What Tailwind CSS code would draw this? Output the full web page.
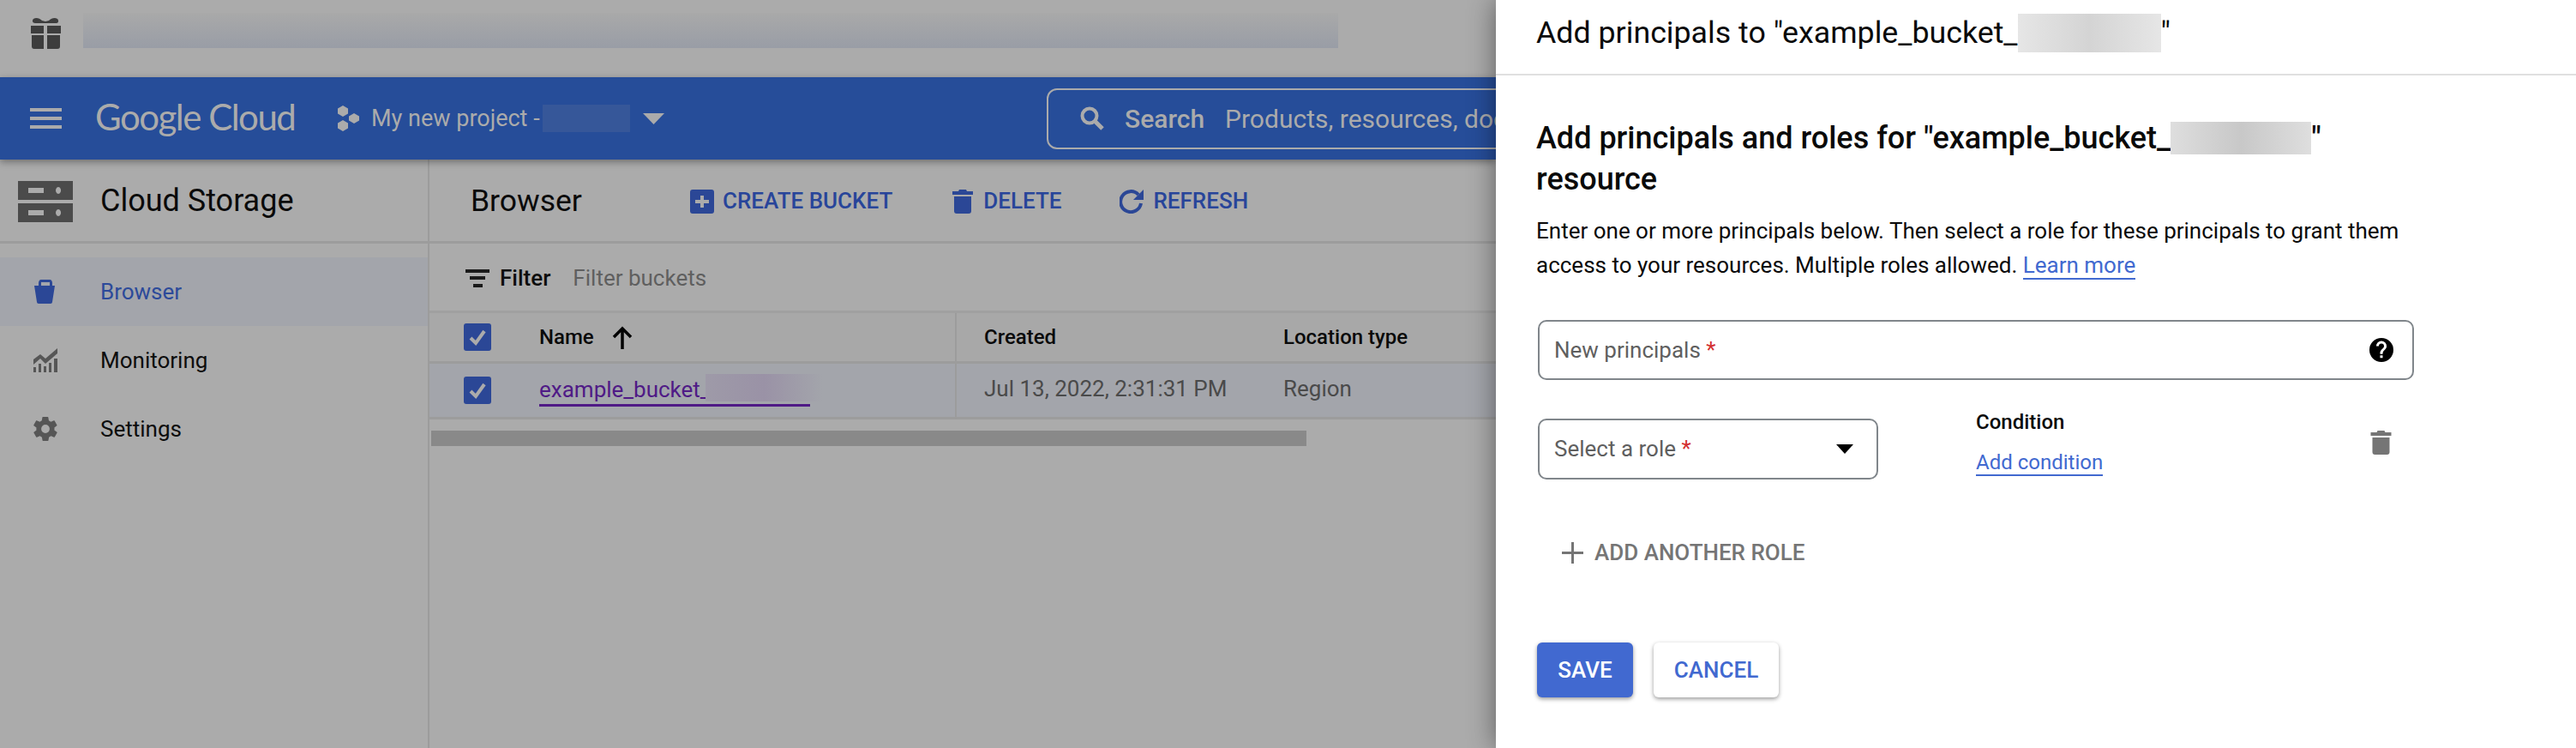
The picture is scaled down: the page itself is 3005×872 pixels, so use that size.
<!doctype html>
<html lang="en">
<head>
  <meta charset="utf-8">
  <title>Add principals</title>
  <script src="https://cdn.jsdelivr.net/npm/@tailwindcss/browser@4"></script>
</head>
<body class="w-[3005px] h-[872px] overflow-hidden flex font-['Roboto',sans-serif] bg-[#ababab]">
  <!-- dimmed console page -->
  <div class="w-[1745px] h-full shrink-0 overflow-hidden flex flex-col">
    <div class="h-[90px] shrink-0 flex items-start pl-[35px] pt-[15px]">
      <svg class="w-[37px] h-[37px] mt-[5px]" viewBox="0 0 37 37" fill="#3d3d3d">
        <path d="M4 2c3-2 7-1 10 2l4 1 4-1c3-3 7-4 10-2 2 2 1 5-1 5H6C3 7 2 4 4 2z"/>
        <path d="M1 10h15v9H1zM20 10h16v9H20zM2 21h14v16H5c-2 0-3-1-3-3zM20 21h15v13c0 2-1 3-3 3H20z"/>
      </svg>
      <div class="ml-[25px] w-[1464px] h-[41px] bg-linear-to-b from-[#a9a9a9] to-[#999da6]"></div>
    </div>

    <header class="h-[96px] shrink-0 bg-[#264d99] flex items-center relative z-10 shadow-[0_3px_8px_rgba(0,0,0,0.35)] text-[#ababab] whitespace-nowrap">
      <svg class="ml-[35px] w-[37px] h-[24px] shrink-0" viewBox="0 0 37 24" fill="#ababab"><path d="M0 0h37v4H0zM0 10h37v4H0zM0 20h37v4H0z"/></svg>
      <span class="ml-[39px] w-[240px] shrink-0 font-['Lato',sans-serif] text-[42px] tracking-[-1.5px] leading-none mb-[4px]">Google Cloud</span>
      <svg class="ml-[42px] w-[27px] h-[30px] shrink-0" viewBox="0 0 27 30" fill="#ababab">
        <path d="M7 0l6 3.500v6L7 13 1 9.500v-6zM20 9l6 3.500v5L20 21l-6-3.500v-5zM7 17l6 3.500v6L7 30l-6-3.500v-6z"/>
      </svg>
      <span class="ml-[13px] w-[192px] shrink-0 text-[27px] leading-none">My new project -</span>
      <div class="ml-[8px] w-[102px] h-[32px] shrink-0 bg-[#365799]"></div>
      <svg class="ml-[15px] w-[25px] h-[13px] shrink-0" viewBox="0 0 25 13" fill="#ababab"><path d="M0 0h25L12.500 13z"/></svg>
      <div class="ml-[446px] w-[800px] shrink-0 h-[71px] rounded-[12px] border-2 border-[#ababab] flex items-center pl-[37px] text-[30px]">
        <svg class="w-[28px] h-[28px] shrink-0" viewBox="0 0 28 28" fill="none" stroke="#ababab" stroke-width="4"><circle cx="11" cy="11" r="8.500"/><path d="M17 17l9 9" stroke-width="5"/></svg>
        <span class="ml-[24px] font-medium">Search</span>
        <span class="ml-[24px]">Products, resources, docs (/)</span>
      </div>
    </header>

    <div class="flex-1 flex min-h-0">
      <aside class="w-[501px] shrink-0 border-r-2 border-[#9c9c9c]">
        <div class="h-[98px] border-b-[3px] border-[#9c9c9c] flex items-center pl-[21px]">
          <svg class="w-[64px] h-[48px] mt-[2px] shrink-0" viewBox="0 0 64 48" fill="#4b4b4b">
            <path fill-rule="evenodd" d="M0 0h64v22H0zM12 8v6h18V8zM47 7a3 4 0 1 0 .1 0zM0 26h64v22H0zM12 34v6h18v-6zM47 33a3 4 0 1 0 .1 0z"/>
          </svg>
          <span class="ml-[32px] text-[36px] text-[#0a0a0a]">Cloud Storage</span>
        </div>
        <nav class="pt-[16px] text-[26px] text-[#0d0d0d]">
          <div class="h-[80px] bg-[#a3a5ab] flex items-center pl-[39px] text-[#2c4a9a]">
            <svg class="w-[28px] h-[28px] shrink-0" viewBox="0 0 28 28" fill="#2b4796"><path d="M6 7V4c0-2 1-4 3-4h10c2 0 3 2 3 4v3h3l-3 19c0 1-1 2-2 2H6c-1 0-2-1-2-2L1 7zM9 7h10V3H9z"/></svg>
            <span class="ml-[50px]">Browser</span>
          </div>
          <div class="h-[80px] flex items-center pl-[39px]">
            <svg class="w-[28px] h-[28px] shrink-0" viewBox="0 0 28 28" fill="#565656"><path d="M0 13l8-6 6 5 14-12v6L14 18 8 12 0 19zM0 22h3v6H0zM6 18h3v10H6zM12 21h3v7h-3zM18 17h3v11h-3zM24 12h4v16h-4z"/></svg>
            <span class="ml-[50px]">Monitoring</span>
          </div>
          <div class="h-[80px] flex items-center pl-[39px]">
            <svg class="w-[28px] h-[28px] shrink-0" viewBox="2 2 20 20" fill="#565656"><path d="M19.400 13c.1-.3.1-.7.1-1s0-.7-.1-1l2.100-1.600c.2-.2.200-.4.100-.6l-2-3.500c-.1-.2-.4-.3-.6-.2l-2.500 1c-.5-.4-1.100-.7-1.700-1l-.4-2.600c0-.3-.2-.5-.5-.5h-4c-.3 0-.5.200-.5.500l-.4 2.600c-.6.300-1.200.6-1.700 1l-2.500-1c-.2-.1-.5 0-.6.200l-2 3.500c-.1.200-.1.400.1.600L4.500 11c0 .3-.1.700-.1 1s0 .7.100 1l-2.100 1.600c-.2.200-.2.400-.1.600l2 3.500c.1.200.4.300.6.200l2.500-1c.5.400 1.100.7 1.700 1l.4 2.600c0 .3.2.5.5.5h4c.3 0 .5-.2.5-.5l.4-2.600c.6-.3 1.200-.6 1.700-1l2.500 1c.2.100.5 0 .6-.2l2-3.500c.1-.2.1-.4-.1-.6zM12 15.500a3.500 3.500 0 1 1 0-7 3.500 3.500 0 0 1 0 7z"/></svg>
            <span class="ml-[50px]">Settings</span>
          </div>
        </nav>
      </aside>

      <main class="flex-1 min-w-0">
        <div class="h-[98px] border-b-[3px] border-[#9c9c9c] flex items-center pl-[48px] pt-[2px] text-[#28459a] text-[26px] font-medium whitespace-nowrap">
          <span class="w-[256px] text-[35.500px] font-normal text-[#0a0a0a]">Browser</span>
          <svg class="w-[28px] h-[28px] shrink-0" viewBox="0 0 28 28" fill="#2b4796"><path fill-rule="evenodd" d="M3 0h22a3 3 0 0 1 3 3v22a3 3 0 0 1-3 3H3a3 3 0 0 1-3-3V3a3 3 0 0 1 3-3zM12 7v5H6v4h6v5h4v-5h6v-4h-6V7z"/></svg>
          <span class="ml-[10px]">CREATE BUCKET</span>
          <svg class="ml-[70px] w-[24px] h-[28px] shrink-0" viewBox="0 0 24 28" fill="#2b4796"><path d="M8 0h8l1 2h7v4H0V2h7zM2 8h20v17c0 2-1 3-3 3H5c-2 0-3-1-3-3z"/></svg>
          <span class="ml-[12px]">DELETE</span>
          <svg class="ml-[68px] w-[28px] h-[28px] shrink-0" viewBox="0 0 28 28" fill="none" stroke="#2b4796" stroke-width="4"><path d="M22 6a12 12 0 1 0 3 10"/><path d="M28 0v12H16z" fill="#2b4796" stroke="none"/></svg>
          <span class="ml-[11px]">REFRESH</span>
        </div>
        <div class="h-[81px] border-b-[3px] border-[#a0a0a0] flex items-center pl-[42px] text-[26px] pt-[2px]">
          <svg class="w-[28px] h-[21px] shrink-0" viewBox="0 0 28 21" fill="#1a1a1a"><path d="M0 0h28v4H0zM5 8h18v4H5zM9 17h11v4H9z"/></svg>
          <span class="ml-[12px] font-medium text-[#0d0d0d]">Filter</span>
          <span class="ml-[26px] text-[#5f5f5f]">Filter buckets</span>
        </div>
        <div class="h-[59px] bg-[#a8a8a8] border-b-[3px] border-[#9c9c9c] flex items-stretch text-[24px] font-medium text-[#0a0a0a]">
          <div class="w-[615px] flex items-center pl-[40px] border-r-2 border-[#9c9c9c]">
            <svg class="w-[32px] h-[32px] shrink-0" viewBox="0 0 32 32"><rect width="32" height="32" rx="3" fill="#2b4796"/><path d="M8 17l6 6 10-14" fill="none" stroke="#ababab" stroke-width="4"/></svg>
            <span class="ml-[56px]">Name</span>
            <svg class="ml-[21px] w-[24px] h-[27px] shrink-0" viewBox="0 0 24 27" fill="none" stroke="#000" stroke-width="3.500"><path d="M12 27V3M2 13L12 3l10 10"/></svg>
          </div>
          <div class="w-[381px] flex items-center pl-[32px]">Created</div>
          <div class="flex items-center">Location type</div>
        </div>
        <div class="h-[65px] bg-[#a3a5ab] border-b-[3px] border-[#9c9c9c] flex items-stretch text-[26px] text-[#4a4a4a]">
          <div class="w-[615px] flex items-center pl-[40px] border-r-2 border-[#9c9c9c]">
            <svg class="w-[32px] h-[32px] shrink-0" viewBox="0 0 32 32"><rect width="32" height="32" rx="3" fill="#2b4796"/><path d="M8 17l6 6 10-14" fill="none" stroke="#ababab" stroke-width="4"/></svg>
            <div class="ml-[56px] w-[316px] h-[38px] border-b-[3px] border-[#4f1a86] text-[#4f1a86] flex items-center leading-none relative">
              <span>example_bucket_</span>
              <div class="absolute left-[194px] top-[0px] w-[137px] h-[32px] bg-linear-to-r from-[#9e9aa8] via-[#9a92a6] to-[#a3a5ab]"></div>
            </div>
          </div>
          <div class="w-[381px] flex items-center pl-[32px] pb-[4px]">Jul 13, 2022, 2:31:31 PM</div>
          <div class="flex items-center pb-[4px]">Region</div>
        </div>
        <div class="ml-[2px] mt-[13px] w-[1021px] h-[18px] bg-[#898989]"></div>
      </main>
    </div>
  </div>

  <!-- permissions panel -->
  <section class="w-[1260px] h-full shrink-0 bg-white relative z-20 shadow-[0_0_30px_rgba(0,0,0,0.45)] text-[#0a0a0a]">
    <div class="h-[88px] border-b-2 border-[#e0e0e0] flex items-center pl-[47px] pb-[9px] text-[35.750px] leading-none">
      <span>Add principals to "example_bucket_</span>
      <div class="w-[167px] h-[45px] bg-linear-to-r from-[#e6e6e6] via-[#d4d4d4] to-[#e6e6e6] shrink-0"></div>
      <span>"</span>
    </div>
    <div class="pl-[47px] pt-[49px] w-[1160px]">
      <h2 class="text-[36px] leading-[48px] font-medium w-[1000px] flex flex-wrap items-center">
        <span>Add principals and roles for "example_bucket_</span><span class="w-[164px] h-[38px] bg-linear-to-r from-[#dedede] via-[#c8c8c8] to-[#dedede]"></span><span>"</span>
        <span class="w-full">resource</span>
      </h2>
      <p class="mt-[16px] w-[1020px] text-[26px] leading-[40px]">Enter one or more principals below. Then select a role for these principals to grant them access to your resources. Multiple roles allowed. <a class="text-[#4169d0] border-b-2 border-[#4169d0]">Learn more</a></p>

      <div class="mt-[44px] ml-[2px] w-[1022px] h-[70px] border-2 border-[#80868b] rounded-[10px] flex items-center justify-between pl-[17px] pr-[22px] text-[26px] text-[#5f5f5f]">
        <span>New principals <span class="text-[#d32f2f]">*</span></span>
        <svg class="w-[28px] h-[28px] shrink-0" viewBox="0 0 24 24" fill="#000"><path d="M12 0a12 12 0 1 0 0 24 12 12 0 0 0 0-24zm1.300 20h-2.600v-2.600h2.600zm2.700-8.800l-1.200 1.200c-1 1-1.500 1.800-1.500 3.600h-2.600v-.7c0-1.400.5-2.700 1.500-3.700l1.600-1.600c.5-.5.800-1.100.8-1.800a2.600 2.600 0 0 0-5.200 0H6.800a5.200 5.200 0 0 1 10.400 0c0 1.100-.5 2.200-1.200 3z"/></svg>
      </div>

      <div class="mt-[45px] ml-[2px] flex items-start relative">
        <div class="w-[397px] h-[71px] border-2 border-[#80868b] rounded-[10px] flex items-center justify-between pl-[17px] pr-[27px] text-[26px] text-[#5f5f5f]">
          <span>Select a role <span class="text-[#d32f2f]">*</span></span>
          <svg class="w-[20px] h-[11px] shrink-0" viewBox="0 0 20 11" fill="#000"><path d="M0 0h20L10 11z"/></svg>
        </div>
        <div class="ml-[114px] -mt-[10px] flex flex-col items-start text-[24px]">
          <span class="font-medium leading-[28px]">Condition</span>
          <a class="mt-[19px] text-[#4169d0] border-b-2 border-[#4169d0] leading-[28px]">Add condition</a>
        </div>
        <svg class="absolute left-[971px] top-[14px] w-[25px] h-[28px]" viewBox="0 0 24 28" fill="#757575"><path d="M8 0h8l1 2h7v4H0V2h7zM2 8h20v17c0 2-1 3-3 3H5c-2 0-3-1-3-3z"/></svg>
      </div>

      <div class="mt-[66px] ml-[30px] flex items-center text-[26px] font-medium text-[#757575]">
        <svg class="w-[25px] h-[25px] shrink-0" viewBox="0 0 25 25" fill="#757575"><path d="M11 0h3v11h11v3H14v11h-3V14H0v-3h11z"/></svg>
        <span class="ml-[13px]">ADD ANOTHER ROLE</span>
      </div>

      <div class="mt-[85px] ml-[1px] flex gap-[24px] text-[26px] font-medium">
        <button class="w-[112px] h-[64px] rounded-[6px] bg-[#4169d0] text-white shadow-[0_2px_5px_rgba(0,0,0,0.4)]">SAVE</button>
        <button class="w-[146px] h-[64px] rounded-[6px] bg-white text-[#4169d0] shadow-[0_2px_5px_rgba(0,0,0,0.4)]">CANCEL</button>
      </div>
    </div>
  </section>
</body>
</html>
